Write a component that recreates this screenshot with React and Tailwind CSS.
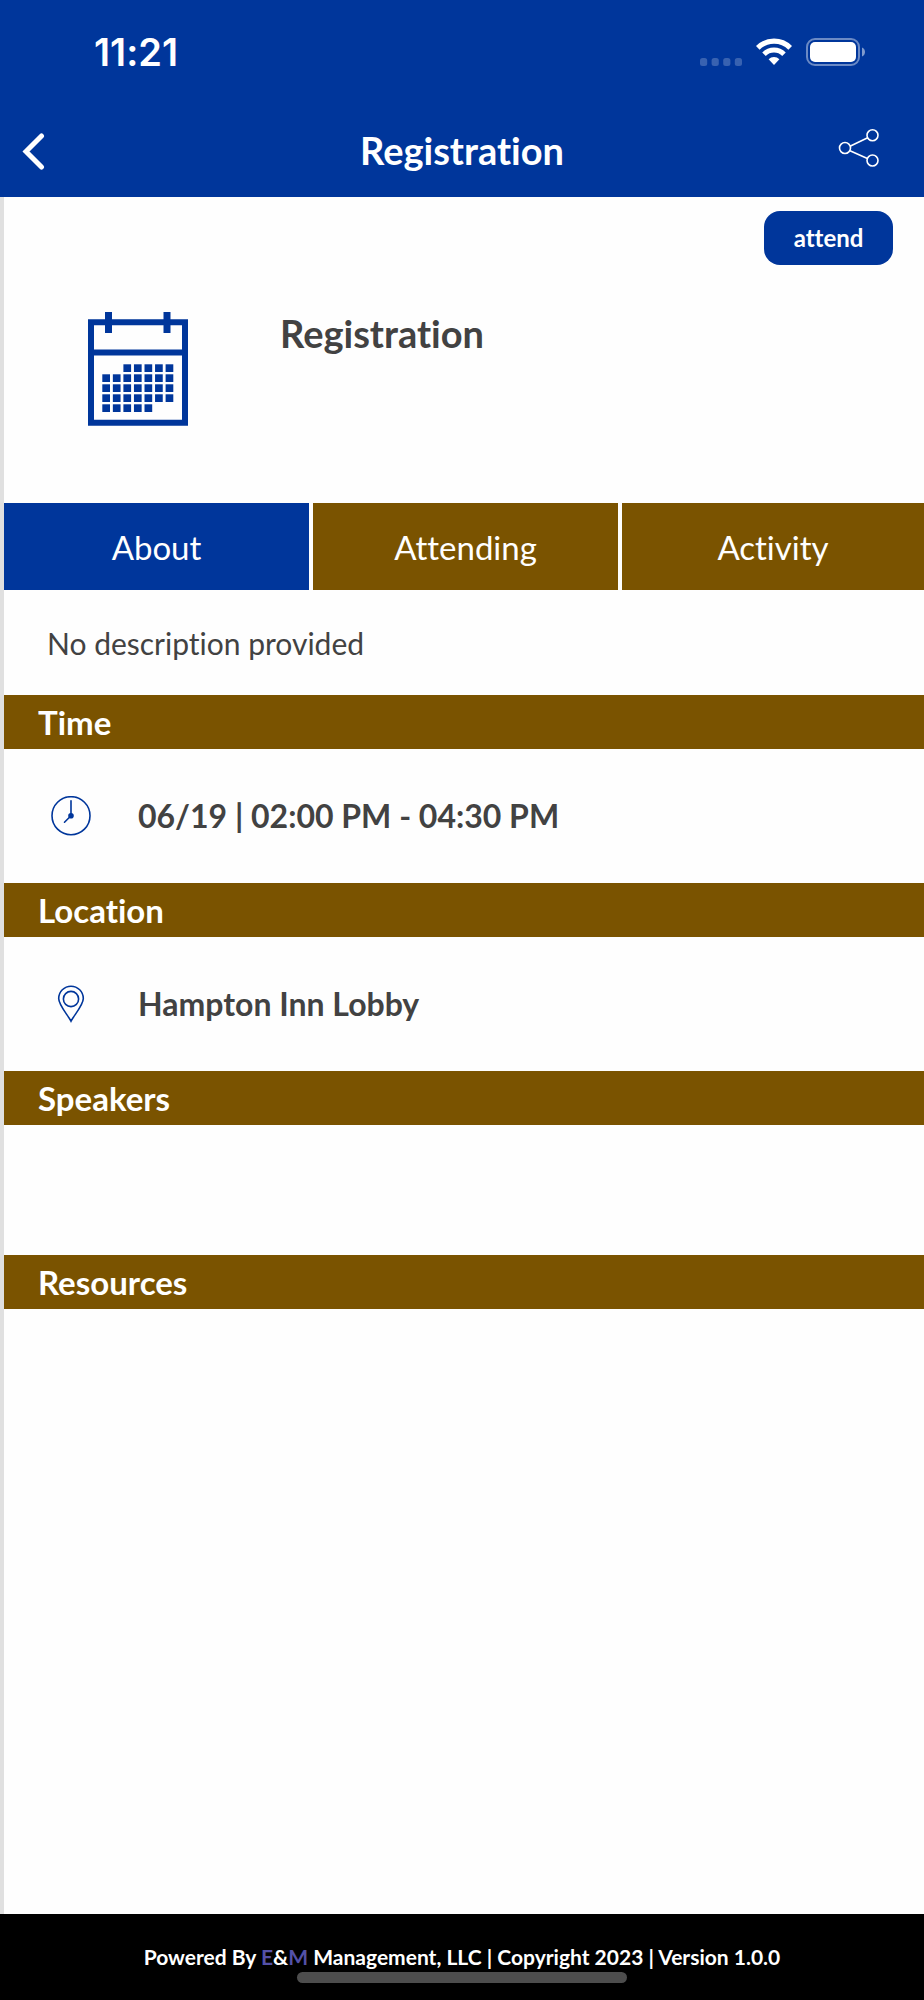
import { useState } from "react";

const tabs = ["About", "Attending", "Activity"];

// columns that are filled in on each row of the calendar icon
const calendarRows = [
  [2, 3, 4, 5, 6],
  [0, 1, 2, 3, 4, 5, 6],
  [0, 1, 2, 3, 4, 5, 6],
  [0, 1, 2, 3, 4, 5, 6],
  [0, 1, 2, 3, 4],
];

const SignalDots = () => (
  <svg className="w-[42px] h-2" viewBox="0 0 42 8" fill="#fff" fillOpacity="0.22" aria-hidden="true">
    <rect x="0" y="0" width="7.2" height="8" rx="2.5" />
    <rect x="11.6" y="0" width="7.2" height="8" rx="2.5" />
    <rect x="23.2" y="0" width="7.2" height="8" rx="2.5" />
    <rect x="34.8" y="0" width="7.2" height="8" rx="2.5" />
  </svg>
);

const WifiIcon = () => (
  <svg className="w-9 h-7" viewBox="0 0 36 28" aria-hidden="true">
    <path d="M1.8 9.8a23 23 0 0 1 32.4 0" fill="none" stroke="#fff" strokeWidth="5.2" />
    <path d="M8 16.2a14.2 14.2 0 0 1 20 0" fill="none" stroke="#fff" strokeWidth="5" />
    <path d="M12.6 21.2a7.8 7.8 0 0 1 10.8 0L18 26.9z" fill="#fff" />
  </svg>
);

const BatteryIcon = () => (
  <svg className="w-[60px] h-7" viewBox="0 0 60 28" aria-hidden="true">
    <rect x="1" y="1" width="52" height="26" rx="8" fill="none" stroke="#fff" strokeOpacity="0.42" strokeWidth="2" />
    <rect x="4" y="4" width="46" height="20" rx="5" fill="#fff" />
    <path d="M56 9.5c4 1.600 4 7.400 0 9z" fill="#fff" fillOpacity="0.5" />
  </svg>
);

const BackIcon = () => (
  <svg className="w-6 h-10" viewBox="0 0 24 40" fill="none" stroke="#fff" strokeWidth="5" strokeLinecap="round" aria-hidden="true">
    <path d="M19.500 6 4 21.500 19.500 37" />
  </svg>
);

const ShareIcon = () => (
  <svg className="w-[42px] h-10 overflow-visible" viewBox="0 0 42 40" fill="none" stroke="#fff" strokeWidth="1.6" aria-hidden="true">
    <circle cx="7" cy="18" r="5.5" />
    <circle cx="34.500" cy="5.300" r="5.5" />
    <circle cx="34.500" cy="30.500" r="5.5" />
    <path d="M12 16.200 29.700 7.800M12 20.800l17.400 7.600" />
  </svg>
);

const CalendarIcon = () => (
  <svg className="w-[102px] h-[116px]" viewBox="0 0 102 116" fill="#00369b" aria-hidden="true">
    <path d="M4 11.300h94v100.400H4zM4 41.600h94" fill="none" stroke="#00369b" strokeWidth="6" />
    <rect x="18" y="1" width="7" height="21" />
    <rect x="76.500" y="1" width="7" height="21" />
    {calendarRows.map((cols, row) =>
      cols.map((col) => (
        <rect key={`${row}-${col}`} x={15.3 + col * 10.55} y={53.3 + row * 10} width="7.700" height="7.700" />
      ))
    )}
  </svg>
);

const ClockIcon = () => (
  <svg className="w-10 h-10" viewBox="0 0 40 40" fill="none" stroke="#00369b" strokeWidth="1.6" aria-hidden="true">
    <circle cx="20" cy="19.700" r="19" />
    <path d="M20 4.700v15l-6.500 6.500" strokeLinecap="round" />
    <circle cx="20" cy="19.700" r="2" fill="#00369b" />
  </svg>
);

const PinIcon = () => (
  <svg className="w-10 h-10" viewBox="0 0 40 40" fill="none" stroke="#00369b" strokeWidth="1.6" aria-hidden="true">
    <path d="M20 37.200C17 31.200 7.700 21.200 7.700 14.500a12.300 12.300 0 0 1 24.600 0c0 6.700-9.300 16.700-12.300 22.700z" />
    <circle cx="20" cy="15" r="7.600" />
  </svg>
);

const Section = ({ title, children }) => (
  <section>
    <h2 className="h-[54px] pl-[34px] flex items-center bg-[#7a5300] text-white text-[33px] leading-10 font-bold">
      {title}
    </h2>
    {children}
  </section>
);

const DetailRow = ({ icon, text }) => (
  <div className="h-[134px] pl-[47px] flex items-center gap-[47px] text-[32px] leading-10 font-bold text-[#424242]">
    {icon}
    <p>{text}</p>
  </div>
);

const App = () => {
  const [activeTab, setActiveTab] = useState("About");

  return (
    <div className="min-h-screen flex flex-col bg-[#fefefe] text-[#424242] font-['Lato',sans-serif] [font-variant-ligatures:none]">
      <header className="bg-[#00369b] text-white">
        <div className="h-[104px] pl-[94px] pr-[58px] flex items-center justify-between">
          <span className="text-[38px] leading-10 font-semibold font-['Inter',sans-serif]">11:21</span>
          <div className="flex items-end gap-[14px]">
            <SignalDots />
            <WifiIcon />
            <BatteryIcon />
          </div>
        </div>

        <div className="h-[93px] pb-px grid grid-cols-[1fr_auto_1fr] items-center">
          <button type="button" aria-label="Back" className="justify-self-start pl-[22px] cursor-pointer">
            <BackIcon />
          </button>
          <h1 className="text-[38px] leading-10 font-bold">Registration</h1>
          <button type="button" aria-label="Share" className="justify-self-end pr-[44px] cursor-pointer">
            <ShareIcon />
          </button>
        </div>
      </header>

      <main className="flex-1 border-l-4 border-[#e0e0e0]">
        <div className="pt-[14px] pr-[31px] flex justify-end">
          <button
            type="button"
            className="w-[129px] h-[54px] rounded-2xl bg-[#00369b] text-white text-2xl font-bold cursor-pointer"
          >
            attend
          </button>
        </div>

        <div className="pt-[46px] pb-[76px] pl-[83px] flex items-start gap-[91px]">
          <CalendarIcon />
          <h2 className="pt-0.5 text-[38px] leading-10 font-bold">Registration</h2>
        </div>

        <div role="tablist" className="grid grid-cols-[305fr_305fr_302fr] gap-1">
          {tabs.map((tab) => (
            <button
              key={tab}
              type="button"
              role="tab"
              aria-selected={activeTab === tab}
              onClick={() => setActiveTab(tab)}
              className={`h-[87px] text-[33px] leading-10 text-white cursor-pointer ${
                activeTab === tab ? "bg-[#00369b]" : "bg-[#7a5300]"
              }`}
            >
              {tab}
            </button>
          ))}
        </div>

        <p className="h-[105px] pl-[43px] flex items-center text-3xl">No description provided</p>

        <Section title="Time">
          <DetailRow icon={<ClockIcon />} text="06/19 | 02:00 PM - 04:30 PM" />
        </Section>
        <Section title="Location">
          <DetailRow icon={<PinIcon />} text="Hampton Inn Lobby" />
        </Section>
        <Section title="Speakers">
          <div className="h-[130px]" />
        </Section>
        <Section title="Resources" />
      </main>

      <footer className="pt-7 pb-[17px] flex flex-col items-center bg-black text-white">
        <p className="text-[21px] leading-[30px] font-bold">
          Powered By <span className="text-[#5451a8]">E</span>&amp;<span className="text-[#5451a8]">M</span>{" "}
          Management, LLC | Copyright 2023 | Version 1.0.0
        </p>
        <div className="w-[330px] h-[11px] rounded-full bg-[#4d4d4d]" />
      </footer>
    </div>
  );
};

export default App;
